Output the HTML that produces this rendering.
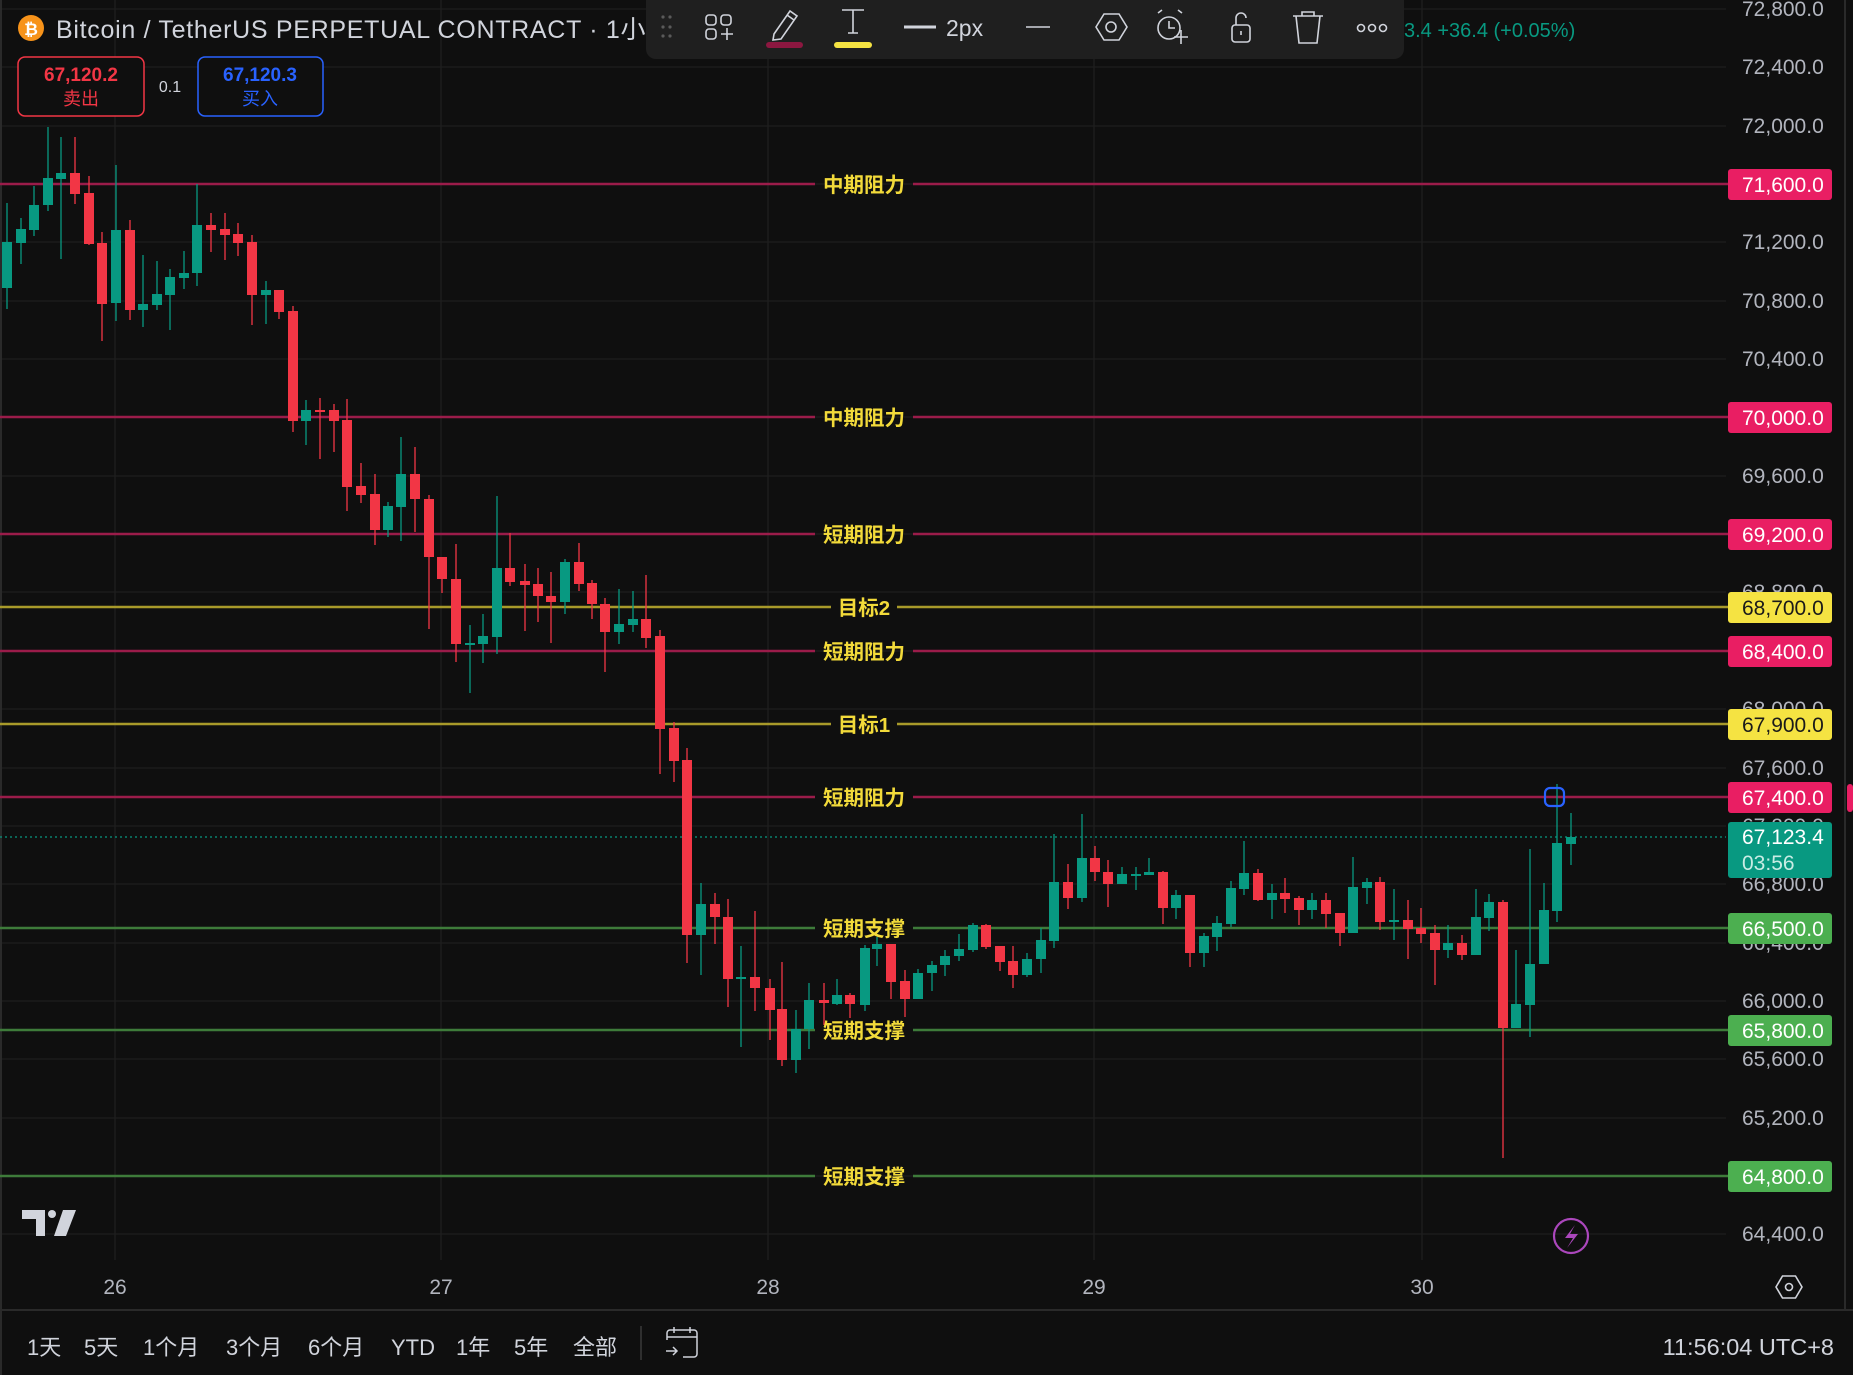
<!DOCTYPE html>
<html><head><meta charset="utf-8">
<style>
html,body{margin:0;padding:0;background:#0f0f0f;width:1853px;height:1375px;overflow:hidden}
svg{display:block}
text{font-family:"Liberation Sans","Noto Sans CJK SC",sans-serif}
</style></head>
<body>
<svg width="1853" height="1375" viewBox="0 0 1853 1375" xmlns="http://www.w3.org/2000/svg">
<rect width="1853" height="1375" fill="#0f0f0f"/>
<g stroke="#1f1f1f" stroke-width="1.3">
<path d="M0 9H1726M0 67H1726M0 126H1726M0 184H1726M0 242H1726M0 301H1726M0 359H1726M0 417H1726M0 476H1726M0 534H1726M0 592H1726M0 651H1726M0 709H1726M0 768H1726M0 826H1726M0 884H1726M0 943H1726M0 1001H1726M0 1059H1726M0 1118H1726M0 1176H1726M0 1234H1726"/>
<path d="M115 0V1260M441 0V1260M768 0V1260M1094 0V1260M1422 0V1260"/>
</g>
<path d="M1 0V1375M1845 0V1310" stroke="#2a2a2a" stroke-width="2"/>
<g fill="#b2b5be" font-size="21">
<text x="1742" y="16">72,800.0</text><text x="1742" y="74">72,400.0</text><text x="1742" y="133">72,000.0</text>
<text x="1742" y="249">71,200.0</text><text x="1742" y="308">70,800.0</text><text x="1742" y="366">70,400.0</text>
<text x="1742" y="483">69,600.0</text><text x="1742" y="599">68,800.0</text><text x="1742" y="716">68,000.0</text>
<text x="1742" y="775">67,600.0</text><text x="1742" y="833">67,200.0</text><text x="1742" y="891">66,800.0</text>
<text x="1742" y="950">66,400.0</text><text x="1742" y="1008">66,000.0</text><text x="1742" y="1066">65,600.0</text>
<text x="1742" y="1125">65,200.0</text><text x="1742" y="1241">64,400.0</text>
</g>
<path d="M0 837H1726" stroke="#089981" stroke-width="1.2" stroke-dasharray="2 3"/>
<g stroke-width="2.6">
<path d="M0 184H815M913 184H1728M0 417H815M913 417H1728M0 534H815M913 534H1728M0 651H815M913 651H1728M0 797H815M913 797H1728" stroke="#9b1c4a"/>
<path d="M0 607H831M897 607H1728M0 724H831M897 724H1728" stroke="#a89a2a"/>
<path d="M0 928H815M913 928H1728M0 1030H815M913 1030H1728M0 1176H815M913 1176H1728" stroke="#3e7b3a"/>
</g>
<g fill="#089981">
<path stroke="#089981" stroke-width="1.3" d="M7 203V309M21 218V264M34 186V236M48 127V211M61 137V259M116 165V321M143 255V327M157 261V310M170 269V330M184 251V289M197 184V286M266 281V324M306 400V445M388 502V537M401 437V541M470 625V693M483 614V663M497 496V654M565 559V614M619 589V644M633 591V632M701 883V975M741 946V1047M796 1010V1073M809 983V1049M837 979V1005M865 945V1011M877 937V966M918 969V999M932 961V991M945 950V976M959 934V961M973 923V952M1027 953V977M1041 928V973M1054 834V948M1082 814V902M1122 867V884M1136 867V890M1149 858V875M1176 890V919M1204 933V967M1217 916V951M1231 881V927M1244 841V895M1272 884V919M1312 893V919M1353 857V933M1367 878V904M1394 889V940M1448 925V958M1476 889V955M1489 894V931M1516 950V1028M1530 849V1037M1544 883V964M1557 784V922M1571 813V865"/>
<rect x="2" y="242" width="10" height="46"/><rect x="16" y="229" width="10" height="14"/><rect x="29" y="205" width="10" height="25"/><rect x="43" y="178" width="10" height="27"/><rect x="56" y="173" width="10" height="6"/><rect x="111" y="230" width="10" height="73"/><rect x="138" y="304" width="10" height="6"/><rect x="152" y="294" width="10" height="11"/><rect x="165" y="277" width="10" height="18"/><rect x="179" y="273" width="10" height="5"/><rect x="192" y="225" width="10" height="48"/><rect x="261" y="290" width="10" height="5"/><rect x="301" y="410" width="10" height="11"/><rect x="383" y="506" width="10" height="24"/><rect x="396" y="474" width="10" height="33"/><rect x="465" y="643" width="10" height="2"/><rect x="478" y="636" width="10" height="8"/><rect x="492" y="568" width="10" height="69"/><rect x="560" y="562" width="10" height="40"/><rect x="614" y="624" width="10" height="8"/><rect x="628" y="619" width="10" height="6"/><rect x="696" y="904" width="10" height="31"/><rect x="736" y="977" width="10" height="2"/><rect x="791" y="1029" width="10" height="31"/><rect x="804" y="1000" width="10" height="29"/><rect x="832" y="995" width="10" height="9"/><rect x="860" y="948" width="10" height="57"/><rect x="872" y="944" width="10" height="5"/><rect x="913" y="973" width="10" height="26"/><rect x="927" y="965" width="10" height="8"/><rect x="940" y="956" width="10" height="9"/><rect x="954" y="949" width="10" height="7"/><rect x="968" y="925" width="10" height="25"/><rect x="1022" y="959" width="10" height="16"/><rect x="1036" y="940" width="10" height="19"/><rect x="1049" y="882" width="10" height="59"/><rect x="1077" y="858" width="10" height="40"/><rect x="1117" y="874" width="10" height="10"/><rect x="1131" y="874" width="10" height="2"/><rect x="1144" y="872" width="10" height="3"/><rect x="1171" y="895" width="10" height="13"/><rect x="1199" y="936" width="10" height="17"/><rect x="1212" y="923" width="10" height="14"/><rect x="1226" y="888" width="10" height="36"/><rect x="1239" y="873" width="10" height="16"/><rect x="1267" y="893" width="10" height="7"/><rect x="1307" y="900" width="10" height="10"/><rect x="1348" y="887" width="10" height="46"/><rect x="1362" y="882" width="10" height="6"/><rect x="1389" y="920" width="10" height="2"/><rect x="1443" y="943" width="10" height="7"/><rect x="1471" y="917" width="10" height="38"/><rect x="1484" y="902" width="10" height="16"/><rect x="1511" y="1004" width="10" height="24"/><rect x="1525" y="964" width="10" height="41"/><rect x="1539" y="910" width="10" height="54"/><rect x="1552" y="843" width="10" height="68"/><rect x="1566" y="837" width="10" height="7"/>
</g>
<g fill="#f23645">
<path stroke="#f23645" stroke-width="1.3" d="M75 137V204M89 176V245M102 232V341M130 220V320M211 213V252M225 213V260M238 223V256M252 235V325M279 290V319M293 306V432M320 398V459M334 404V452M347 399V511M361 463V503M375 474V545M415 447V532M429 495V629M442 557V593M456 544V662M510 533V586M525 564V631M538 568V622M551 572V643M579 543V591M592 580V619M605 598V672M646 575V648M660 630V774M674 722V782M687 748V963M715 893V944M728 899V1007M755 911V1011M770 979V1040M782 962V1066M824 983V1025M850 993V1018M891 944V999M905 970V1017M986 924V949M1000 946V971M1013 946V988M1068 864V909M1095 846V881M1108 860V907M1163 871V924M1190 895V967M1258 869V901M1285 878V913M1299 896V925M1326 893V928M1340 913V946M1380 877V930M1408 900V959M1421 908V943M1435 925V985M1462 935V960M1503 900V1158"/>
<rect x="70" y="173" width="10" height="21"/><rect x="84" y="193" width="10" height="51"/><rect x="97" y="243" width="10" height="61"/><rect x="125" y="230" width="10" height="80"/><rect x="206" y="225" width="10" height="5"/><rect x="220" y="229" width="10" height="6"/><rect x="233" y="234" width="10" height="9"/><rect x="247" y="242" width="10" height="53"/><rect x="274" y="290" width="10" height="22"/><rect x="288" y="311" width="10" height="110"/><rect x="315" y="410" width="10" height="2"/><rect x="329" y="410" width="10" height="11"/><rect x="342" y="420" width="10" height="67"/><rect x="356" y="486" width="10" height="9"/><rect x="370" y="494" width="10" height="36"/><rect x="410" y="474" width="10" height="25"/><rect x="424" y="499" width="10" height="58"/><rect x="437" y="557" width="10" height="22"/><rect x="451" y="579" width="10" height="65"/><rect x="505" y="568" width="10" height="14"/><rect x="520" y="581" width="10" height="4"/><rect x="533" y="584" width="10" height="12"/><rect x="546" y="596" width="10" height="6"/><rect x="574" y="562" width="10" height="22"/><rect x="587" y="583" width="10" height="21"/><rect x="600" y="604" width="10" height="28"/><rect x="641" y="619" width="10" height="19"/><rect x="655" y="636" width="10" height="93"/><rect x="669" y="728" width="10" height="33"/><rect x="682" y="760" width="10" height="175"/><rect x="710" y="904" width="10" height="13"/><rect x="723" y="917" width="10" height="62"/><rect x="750" y="977" width="10" height="11"/><rect x="765" y="988" width="10" height="22"/><rect x="777" y="1009" width="10" height="51"/><rect x="819" y="1000" width="10" height="3"/><rect x="845" y="995" width="10" height="9"/><rect x="886" y="944" width="10" height="38"/><rect x="900" y="981" width="10" height="18"/><rect x="981" y="925" width="10" height="22"/><rect x="995" y="946" width="10" height="16"/><rect x="1008" y="961" width="10" height="14"/><rect x="1063" y="882" width="10" height="16"/><rect x="1090" y="858" width="10" height="14"/><rect x="1103" y="872" width="10" height="12"/><rect x="1158" y="872" width="10" height="36"/><rect x="1185" y="895" width="10" height="58"/><rect x="1253" y="873" width="10" height="27"/><rect x="1280" y="893" width="10" height="6"/><rect x="1294" y="898" width="10" height="12"/><rect x="1321" y="900" width="10" height="14"/><rect x="1335" y="913" width="10" height="20"/><rect x="1375" y="882" width="10" height="40"/><rect x="1403" y="920" width="10" height="9"/><rect x="1416" y="928" width="10" height="6"/><rect x="1430" y="933" width="10" height="17"/><rect x="1457" y="943" width="10" height="12"/><rect x="1498" y="902" width="10" height="126"/>
</g>
<rect x="1545" y="788" width="19" height="18" rx="5" fill="none" stroke="#2962ff" stroke-width="2.2"/>
<g fill="#f2da3a" font-size="20.5" font-weight="bold" text-anchor="middle">
<text x="864" y="192">中期阻力</text><text x="864" y="425">中期阻力</text><text x="864" y="542">短期阻力</text>
<text x="864" y="615">目标2</text><text x="864" y="659">短期阻力</text><text x="864" y="732">目标1</text>
<text x="864" y="805">短期阻力</text><text x="864" y="936">短期支撑</text><text x="864" y="1038">短期支撑</text><text x="864" y="1184">短期支撑</text>
</g>
<g>
<rect x="1728" y="169" width="104" height="31" rx="3" fill="#e91e63"/>
<rect x="1728" y="402" width="104" height="31" rx="3" fill="#e91e63"/>
<rect x="1728" y="519" width="104" height="31" rx="3" fill="#e91e63"/>
<rect x="1728" y="592" width="104" height="31" rx="3" fill="#f5e342"/>
<rect x="1728" y="636" width="104" height="31" rx="3" fill="#e91e63"/>
<rect x="1728" y="709" width="104" height="31" rx="3" fill="#f5e342"/>
<rect x="1728" y="782" width="104" height="31" rx="3" fill="#e91e63"/>
<rect x="1728" y="822" width="104" height="56" rx="3" fill="#089981"/>
<rect x="1728" y="913" width="104" height="31" rx="3" fill="#4caf50"/>
<rect x="1728" y="1015" width="104" height="31" rx="3" fill="#4caf50"/>
<rect x="1728" y="1161" width="104" height="31" rx="3" fill="#4caf50"/>
<rect x="1847" y="784" width="6" height="28" rx="3" fill="#e91e63"/>
</g>
<g font-size="21" fill="#ffffff">
<text x="1742" y="192">71,600.0</text><text x="1742" y="425">70,000.0</text><text x="1742" y="542">69,200.0</text>
<text x="1742" y="615" fill="#1a1a1a">68,700.0</text><text x="1742" y="659">68,400.0</text><text x="1742" y="732" fill="#1a1a1a">67,900.0</text>
<text x="1742" y="805">67,400.0</text><text x="1742" y="844">67,123.4</text><text x="1742" y="870" fill="#c8ece4">03:56</text>
<text x="1742" y="936">66,500.0</text><text x="1742" y="1038">65,800.0</text><text x="1742" y="1184">64,800.0</text>
</g>
<circle cx="31" cy="28" r="13" fill="#f7931a"/>
<text x="31" y="35" font-size="17" font-weight="bold" fill="#fff" text-anchor="middle">₿</text>
<text x="56" y="38" font-size="25" fill="#d1d4dc" letter-spacing="0.7">Bitcoin / TetherUS PERPETUAL CONTRACT · 1小时</text>
<text x="1404" y="37" font-size="20" fill="#089981">3.4  +36.4 (+0.05%)</text>
<rect x="18" y="57" width="126" height="59" rx="7" fill="#0f0f0f" stroke="#f23645" stroke-width="1.5"/>
<text x="81" y="81" font-size="19" fill="#f23645" text-anchor="middle" font-weight="bold">67,120.2</text>
<text x="81" y="105" font-size="18" fill="#f23645" text-anchor="middle">卖出</text>
<text x="170" y="92" font-size="16" fill="#d1d4dc" text-anchor="middle">0.1</text>
<rect x="198" y="57" width="125" height="59" rx="7" fill="#0f0f0f" stroke="#2962ff" stroke-width="1.5"/>
<text x="260" y="81" font-size="19" fill="#2962ff" text-anchor="middle" font-weight="bold">67,120.3</text>
<text x="260" y="105" font-size="18" fill="#2962ff" text-anchor="middle">买入</text>
<path d="M646 0H1404V49a10 10 0 0 1-10 10H656a10 10 0 0 1-10-10Z" fill="#1f1f1f"/>
<g fill="#5a5a5a"><circle cx="663" cy="17" r="1.6"/><circle cx="670" cy="17" r="1.6"/><circle cx="663" cy="27" r="1.6"/><circle cx="670" cy="27" r="1.6"/><circle cx="663" cy="36" r="1.6"/><circle cx="670" cy="36" r="1.6"/></g>
<g fill="none" stroke="#d1d4dc" stroke-width="1.6">
<rect x="706" y="15" width="10" height="10" rx="3"/><rect x="721" y="15" width="10" height="10" rx="3"/><rect x="706" y="29" width="10" height="10" rx="3"/><path d="M721 34H733M727 28V40"/>
<path d="M774 34L790 11L797 16L781 39L773 40Z M787 15L794 20"/>
<path d="M842 10H864M853 10V33M848 33H858"/>
<path d="M1026 27H1050"/>
<path d="M1096 27L1104 14H1119L1127 27L1119 40H1104Z"/><circle cx="1111" cy="27" r="5"/>
<circle cx="1169" cy="28" r="11"/><path d="M1169 21V28H1175M1158 13L1162 10M1182 13L1178 10M1174 37H1188M1181 30V44"/>
<rect x="1232" y="25" width="18" height="17" rx="3"/><path d="M1236 25V18a5 5 0 0 1 10 0M1241 31V35"/>
<path d="M1293 16H1323M1302 16V12H1314V16M1296 16L1299 43H1317L1320 16"/>
<circle cx="1361" cy="28" r="3.5"/><circle cx="1372" cy="28" r="3.5"/><circle cx="1383" cy="28" r="3.5"/>
</g>
<rect x="766" y="42" width="37" height="6" rx="3" fill="#8c1740"/>
<rect x="834" y="42" width="38" height="6" rx="3" fill="#f5e342"/>
<path d="M904 27H936" stroke="#d1d4dc" stroke-width="3"/>
<text x="946" y="36" font-size="23" fill="#d1d4dc">2px</text>
<path d="M22 1210H45V1236H36V1219H22Z" fill="#d1d4dc"/><circle cx="52" cy="1214" r="4" fill="#d1d4dc"/>
<path d="M63 1210H76L66 1236H54Z" fill="#d1d4dc"/>
<circle cx="1571" cy="1236" r="17" fill="none" stroke="#ab47bc" stroke-width="2.2"/>
<path d="M1575 1225L1565 1238H1573L1567 1248L1578 1234H1570Z" fill="#ab47bc"/>
<path d="M1776 1287L1782.5 1276H1795.5L1802 1287L1795.5 1298H1782.5Z" fill="none" stroke="#d1d4dc" stroke-width="1.6"/><circle cx="1789" cy="1287" r="3.5" fill="none" stroke="#d1d4dc" stroke-width="1.6"/>
<g font-size="21" fill="#b2b5be" text-anchor="middle">
<text x="115" y="1294">26</text><text x="441" y="1294">27</text><text x="768" y="1294">28</text><text x="1094" y="1294">29</text><text x="1422" y="1294">30</text>
</g>
<path d="M0 1310H1853" stroke="#2a2a2a" stroke-width="2"/>
<g font-size="22" fill="#d1d4dc">
<text x="27" y="1355">1天</text><text x="84" y="1355">5天</text><text x="143" y="1355">1个月</text><text x="226" y="1355">3个月</text>
<text x="308" y="1355">6个月</text><text x="391" y="1355">YTD</text><text x="456" y="1355">1年</text><text x="514" y="1355">5年</text><text x="573" y="1355">全部</text>
</g>
<text x="1834" y="1355" text-anchor="end" font-size="23.5" fill="#d1d4dc">11:56:04 UTC+8</text>
<path d="M641 1326V1360" stroke="#3a3a3a" stroke-width="1.5"/>
<g fill="none" stroke="#d1d4dc" stroke-width="1.5">
<path d="M667 1340V1333a3 3 0 0 1 3-3H694a3 3 0 0 1 3 3V1354a3 3 0 0 1-3 3H683M667 1337H697M674 1327V1333M690 1327V1333M666 1351H677M673 1347L677 1351L673 1355"/>
</g>
</svg>
</body></html>
